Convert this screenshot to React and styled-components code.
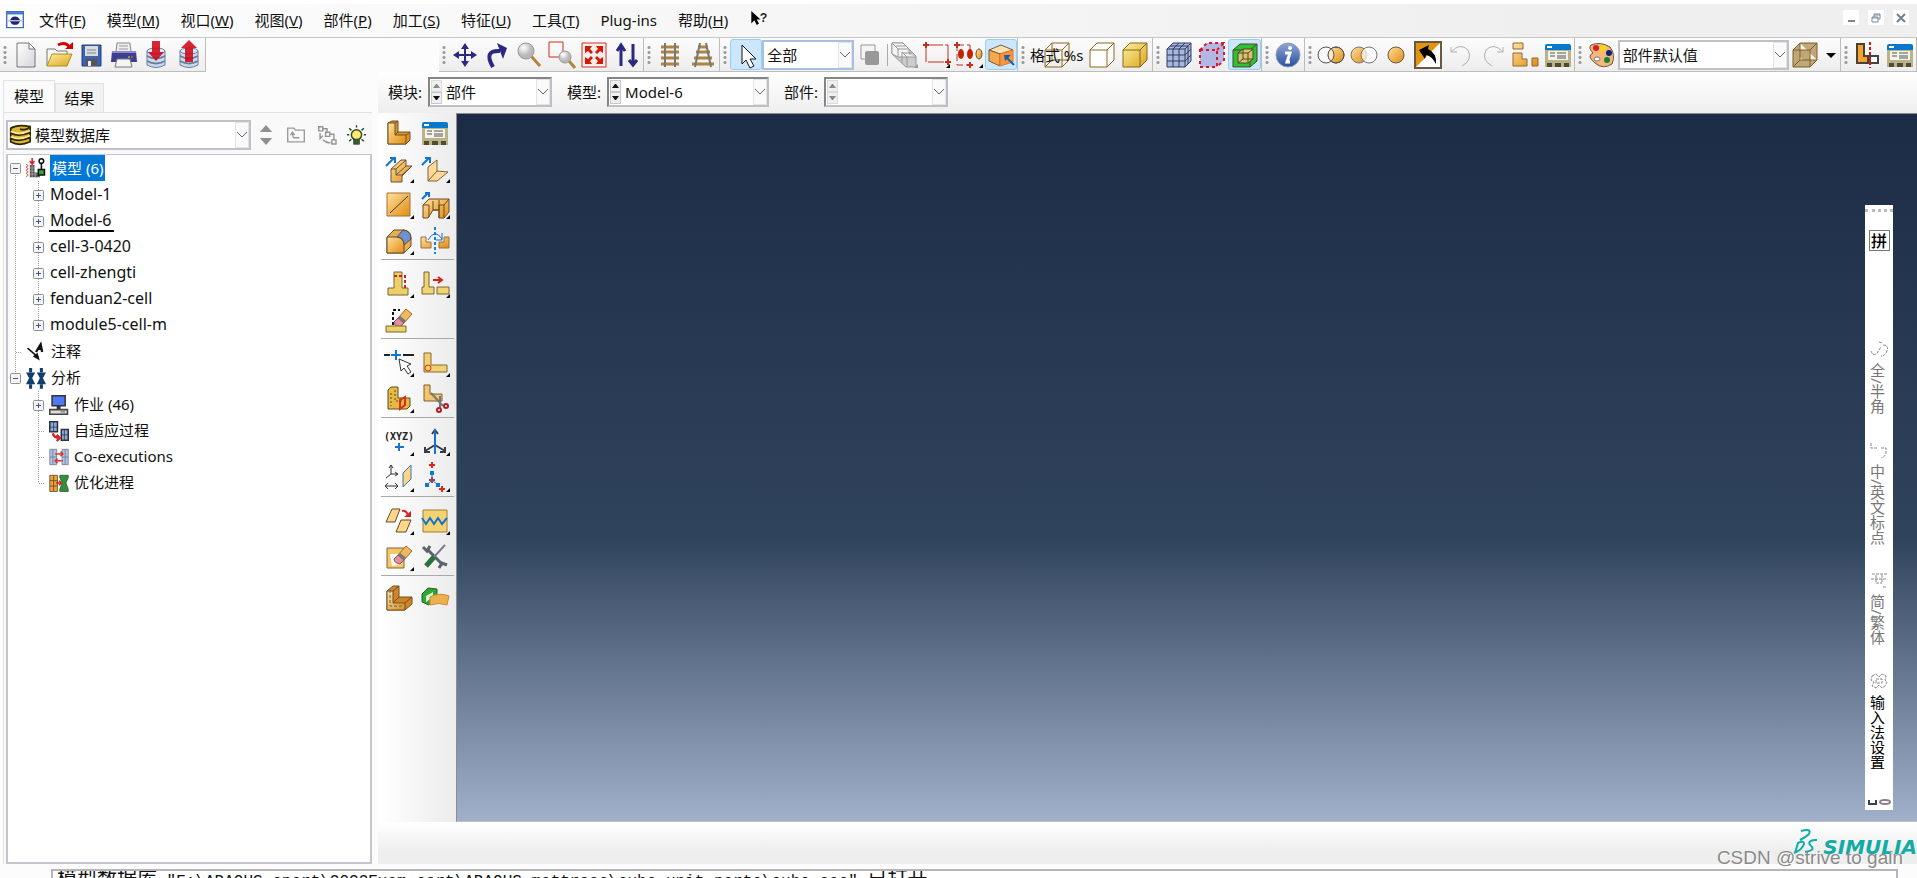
import React, {useState} from 'react';
import styled, {createGlobalStyle, css} from 'styled-components';

const GlobalStyle = createGlobalStyle`
    * {
        box-sizing: border-box;
    }

    body {
        margin: 0;
        overflow: hidden;
        background: #fcfcfc;
        color: #111;
        font-family: 'Noto Sans', 'Noto Sans CJK SC', sans-serif;
        font-size: 15px;
        line-height: 20px;
    }

    button, select, input {
        margin: 0;
        padding: 0;
        color: inherit;
        font: inherit;
    }
`;

const Page = styled.div`
    display: flex;
    flex-direction: column;
    height: 100vh;
    overflow: hidden;
`;

const MenuBar = styled.header`
    display: flex;
    align-items: center;
    justify-content: space-between;
    flex: 0 0 38px;
    padding: 0 8px 1px 6px;
    border-top: 4px solid #fff;
    border-bottom: 1px solid #c6c6c6;
    background: linear-gradient(90deg, #fdfdfd, #efefef 80%);
`;

const Menus = styled.nav`
    display: flex;
    align-items: center;
    gap: 21px;
`;

const MenuIcon = styled.span`
    display: flex;
    width: 18px;
    margin-right: -6px;
`;

const MenuButton = styled.button`
    border: none;
    background: none;
    white-space: nowrap;
`;

const WindowButtons = styled.div`
    display: flex;
    align-self: flex-start;
    gap: 9px;
    margin-top: 6px;
`;

const WindowButton = styled.button`
    display: flex;
    align-items: center;
    justify-content: center;
    width: 16px;
    height: 15px;
    border: none;
    background: #fff;
`;

const Toolbar = styled.div`
    display: flex;
    flex: 0 0 34px;
    overflow: hidden;
`;

const ToolbarSpace = styled.div`
    flex: 0 1 235px;
`;

const ToolGroup = styled.div`
    display: flex;
    align-items: center;
    flex: 0 0 ${({$width}) => $width}px;
    border-right: 1px solid #bdbdbd;
    border-bottom: 1px solid #bdbdbd;
    background: linear-gradient(#fcfcfc, #ededed);
`;

const Grip = styled.span`
    flex: 0 0 10px;
    height: 20px;
    background: radial-gradient(circle, #999 1px, transparent 2px) 3px 0 / 4px 5px repeat-y;
`;

const ToolButton = styled.button`
    position: relative;
    display: flex;
    align-items: center;
    justify-content: center;
    flex: 1 1 ${({$basis}) => $basis || 0}px;
    min-width: 0;
    height: 31px;
    border: 1px solid transparent;
    border-radius: 3px;
    background: none;

    ${({$active}) => $active && css`
        border-color: #98cdf5;
        background: #cce6fc;
    `}

    ${({$more}) => $more && css`
        &::after {
            content: '';
            position: absolute;
            right: 1px;
            bottom: 1px;
            border-bottom: 4px solid ${$more === 'off' ? '#999' : '#000'};
            border-left: 4px solid transparent;
        }
    `}

    svg {
        flex: none;
    }

    &:hover {
        background: #dceefb;
    }
`;

const ToolCaption = styled.span`
    position: absolute;
    white-space: nowrap;
`;

const Divider = styled.span`
    flex: 0 0 1px;
    height: 22px;
    background: #aaa;
`;

const SelectBox = styled.div`
    display: grid;
    flex: 0 0 ${({$width}) => $width}px;
    height: 30px;
    border: 2px solid ${({$focus}) => ($focus ? '#a9bfe2' : '#bfc0c8')};
    background: #fff;
`;

const Select = styled.select`
    grid-area: 1 / 1;
    min-width: 0;
    padding: 0 18px 0 ${({$indent}) => $indent || 3}px;
    border: none;
    outline: none;
    background: transparent;
    appearance: none;
`;

const Chevron = styled.span`
    display: flex;
    grid-area: 1 / 1;
    align-items: center;
    justify-content: center;
    justify-self: end;
    width: 14px;
    border: 1px solid #e4e4e4;
    background: #fafafa;
    pointer-events: none;
`;

const SelectIcon = styled.span`
    display: flex;
    grid-area: 1 / 1;
    align-items: center;
    padding-left: 1px;
    pointer-events: none;
`;

const Main = styled.main`
    display: flex;
    flex: 1;
    gap: 6px;
    min-height: 0;
    padding-bottom: 5px;
`;

const Sidebar = styled.aside`
    display: flex;
    flex: 0 0 372px;
    flex-direction: column;
    padding-left: 3px;
`;

const Tabs = styled.div`
    display: flex;
    align-items: flex-end;
    flex: 0 0 40px;
`;

const Tab = styled.button`
    width: ${({$active}) => ($active ? 52 : 49)}px;
    height: ${({$active}) => ($active ? 32 : 29)}px;
    padding-bottom: 1px;
    border: 1px solid #e2e2e2;
    border-bottom: none;
    background: ${({$active}) => ($active ? '#fbfbfb' : '#f2f2f2')};
`;

const Panel = styled.div`
    display: flex;
    flex: 1;
    flex-direction: column;
    gap: 4px;
    min-height: 0;
    padding: 7px 0 0 2px;
    border-top: 1px solid #e2e2e2;
    border-left: 1px solid #e2e2e2;
    background: #f9f9f9;
`;

const PanelTools = styled.div`
    display: flex;
    align-items: center;
`;

const PanelButton = styled.button`
    display: flex;
    align-items: center;
    justify-content: center;
    flex: 1;
    height: 28px;
    border: none;
    background: none;
`;

const Tree = styled.div`
    flex: 1;
    border: 2px solid #c5c6cd;
    border-top-width: 1px;
    background: #fff;
`;

const dots = '#a0a0a0 0 1px, transparent 1px 2px';

const RootList = styled.ul`
    margin: 0;
    padding: 0;
    list-style: none;
    background: repeating-linear-gradient(${dots}) 7px 20px / 1px 200px no-repeat;
`;

const SubList = styled.ul`
    margin: 0;
    padding: 1px 0 0;
    list-style: none;
    background: repeating-linear-gradient(${dots}) 30px 0 / 1px calc(100% - 13px) no-repeat;
`;

const ModelList = styled(SubList)`
    padding-bottom: 1px;
`;

const Row = styled.div`
    display: flex;
    align-items: center;
    height: 26px;
    padding-left: ${({$level}) => ($level ? 25 : 2)}px;
`;

const Expander = styled.button`
    display: flex;
    width: 11px;
    height: 11px;
    margin-right: 5px;
    border: none;
    background: none;
`;

const Stub = styled.span`
    width: 11px;
    height: 1px;
    margin-right: 5px;
    padding-left: 6px;
    background: repeating-linear-gradient(90deg, ${dots}) content-box;
`;

const RowIcon = styled.span`
    display: flex;
    width: 20px;
    margin-right: 4px;
`;

const Label = styled.span`
    padding: 0 2px 0 1px;
    border-bottom: 2px solid ${({$current}) => ($current ? '#000' : 'transparent')};
    font-size: ${({$large}) => ($large ? 16 : 15)}px;
    line-height: 20px;
    white-space: nowrap;

    ${({$selected}) => $selected && css`
        padding: 0 2px;
        border: none;
        background: #0078d7;
        color: #fff;
        line-height: 26px;
    `}
`;

const Workspace = styled.section`
    display: flex;
    flex: 1;
    flex-direction: column;
    min-width: 0;
`;

const ContextBar = styled.div`
    display: flex;
    align-items: center;
    flex: 0 0 41px;
    gap: 6px;
    padding: 0 0 1px 10px;
    background: linear-gradient(#fff, #eee);
`;

const ContextField = styled.div`
    display: flex;
    align-items: center;
    gap: 6px;
    margin-right: 9px;
`;

const SpinBox = styled.div`
    display: flex;
    width: ${({$width}) => $width}px;
    height: 30px;
    border: 2px solid #bdbec6;
    border-top-color: #858585;
    border-left-color: #858585;
    background: #fff;
`;

const SpinSelect = styled.div`
    display: grid;
    flex: 1;
    min-width: 0;
`;

const Spinner = styled.span`
    display: flex;
    flex-direction: column;
    flex: 0 0 13px;
    padding: 1px;
`;

const SpinButton = styled.button`
    display: flex;
    align-items: center;
    justify-content: center;
    flex: 1;
    border: 1px solid #c8c8c8;
    background: #f0f0f0;
    color: #111;

    &:disabled {
        border-color: #dcdcdc;
        color: #888;
    }
`;

const Stage = styled.div`
    display: flex;
    flex: 1;
    min-height: 0;
`;

const Toolbox = styled.div`
    flex: 0 0 78px;
    padding: 0 2px 0 3px;
    background: linear-gradient(90deg, #fff, #ececec);
`;

const ToolSection = styled.div`
    display: grid;
    grid-template-columns: 36px 36px;
    grid-auto-rows: 36px;
    padding: ${({$first}) => ($first ? 2 : 6)}px 0 0;
    border-bottom: 1px solid #a8a8a8;

    &:last-child {
        padding-top: 4px;
        border-bottom: none;
    }
`;

const ToolboxButton = styled(ToolButton)`
    height: 36px;

    &::after {
        right: 2px;
        bottom: 3px;
    }
`;

const Viewport = styled.div`
    position: relative;
    flex: 1;
    border: 1px solid #8d8d8d;
    border-right: none;
    border-bottom-color: #c0c0c0;
    background: linear-gradient(#1c2c46, #30435d 60%, #a1b0ca);
`;

/* floating input method strip, docked over the viewport */
const ImeBar = styled.div`
    position: absolute;
    top: 91px;
    right: 24px;
    display: flex;
    flex-direction: column;
    align-items: center;
    gap: 28px;
    width: 28px;
    padding: 4px 0;
    background: #fff;
    color: #666;
`;

const ImeHead = styled.div`
    display: flex;
    flex-direction: column;
    align-items: center;
    gap: 18px;
    width: 100%;
    margin-bottom: 62px;
`;

const ImeHandle = styled.span`
    width: 100%;
    border-top: 3px dotted #bbb;
`;

const ImeMode = styled.button`
    width: 21px;
    height: 21px;
    border: 1px solid #777;
    background: #fff;
    color: #000;
    font-size: 16px;
    font-weight: 500;
    line-height: 18px;
`;

const ImeItem = styled.button`
    display: flex;
    flex-direction: column;
    align-items: center;
    gap: 6px;
    border: none;
    background: none;
    color: ${({$strong}) => ($strong ? '#000' : '#777')};
`;

const ImeText = styled.span`
    margin-right: 4px;
    line-height: 16px;
    writing-mode: vertical-rl;
`;

const BrandBar = styled.footer`
    display: flex;
    position: relative;
    align-items: flex-start;
    justify-content: flex-end;
    flex: 0 0 42px;
    padding-top: 6px;
    background: linear-gradient(#fff, #eee 70%);
`;

const Brand = styled.span`
    padding: 9px 0 0 3px;
    color: #12aba5;
    font-family: 'DejaVu Sans', sans-serif;
    font-size: 20px;
    font-style: italic;
    font-weight: 700;
    line-height: 20px;
`;

const Watermark = styled.span`
    position: absolute;
    top: 24px;
    right: 14px;
    color: #8a8a8a;
    font-family: 'Liberation Sans', sans-serif;
    font-size: 19px;
    line-height: 24px;
    text-shadow: 1px 1px #fff;
    white-space: nowrap;
`;

const MessageArea = styled.div`
    flex: 0 0 9px;
    margin: 0 19px 0 51px;
    border: 2px solid #b5b5bb;
    border-bottom: none;
    background: #fff;
    overflow: hidden;
`;

const Message = styled.p`
    margin: 0;
    padding-left: 4px;
    font-family: 'Liberation Mono', 'Noto Sans CJK SC', monospace;
    font-size: 16px;
    line-height: 20px;
    white-space: pre;
`;

const MessageWord = styled.span`
    font-size: 20px;
`;

const SharedGradients = styled.svg`
    position: absolute;
    width: 0;
    height: 0;
`;

const Gradients = () => (
    <SharedGradients aria-hidden="true">
        <defs>
            <linearGradient id="gold" x1="0" y1="0" x2="1" y2="1">
                <stop offset="0" stopColor="#ffe0a0"/>
                <stop offset="1" stopColor="#e08c10"/>
            </linearGradient>
            <linearGradient id="yellow" x1="0" y1="0" x2="1" y2="1">
                <stop offset="0" stopColor="#fff0a0"/>
                <stop offset="1" stopColor="#d9a520"/>
            </linearGradient>
            <linearGradient id="blue" x1="0" y1="0" x2="0" y2="1">
                <stop offset="0" stopColor="#8fa6d8"/>
                <stop offset="1" stopColor="#27509c"/>
            </linearGradient>
            <linearGradient id="paper" x1="0" y1="0" x2="1" y2="1">
                <stop offset="0" stopColor="#fff"/>
                <stop offset="1" stopColor="#d5d5dc"/>
            </linearGradient>
            <radialGradient id="lens" cx=".35" cy=".3">
                <stop offset="0" stopColor="#fff"/>
                <stop offset="1" stopColor="#b8b8b8"/>
            </radialGradient>
        </defs>
    </SharedGradients>
);

const cubeEdges = 'M1 8H18V25H1ZM1 8L8 1H25V18L18 25M18 8L25 1';
const database = (
    <g stroke="#6d7f98" fill="#c9daf2">
        <path d="M4 9V23Q13 28 22 23V9Z"/>
        <ellipse cx="13" cy="9" rx="9" ry="3" fill="#dfe9f7"/>
        <path d="M4 14Q13 19 22 14M4 19Q13 24 22 19" fill="none" strokeWidth="2"/>
    </g>
);
const table = (
    <g>
        <path d="M0 4Q0 2 2 2H24Q26 2 26 4V25H0Z" fill="#0878cc"/>
        <path d="M2 5H7" stroke="#fff" strokeWidth="2"/>
        <path d="M0 8H26V25H0Z" fill="#b9b28a"/>
        <path d="M3 9H23V18H3Z" fill="#f4f4ea"/>
        <path d="M5 11H10M12 11H21M5 14H10M12 14H21M12 16H21" stroke="#555"/>
        <path d="M2 21H7V25H2ZM10 21H16V25H10ZM19 21H24V25H19Z" fill="#4f4c30"/>
    </g>
);
const eraser = (
    <g strokeWidth="1">
        <path d="M12 11L20 2L26 7L18 16Z" fill="#f2b860" stroke="#9a6a28"/>
        <path d="M12 11L18 16L14 20Q8 19 8 15Z" fill="#e88b9b" stroke="#87505a"/>
        <path d="M13 10L19 15" stroke="#777" strokeWidth="3"/>
    </g>
);

const ICONS = {
    newFile: <path d="M4 1H16L22 7V25H4ZM16 1V7H22" fill="url(#paper)" stroke="#777"/>,
    open: (
        <g>
            <path d="M1 24V7H9L11 9H21V13" fill="#f7f7f7" stroke="#777"/>
            <path d="M1 24L6 12H26L21 24Z" fill="url(#yellow)" stroke="#b58a20"/>
            <path d="M12 3Q20 -1 24 6" fill="none" stroke="#d40000" strokeWidth="3"/>
            <path d="M19 7H27V0Z" fill="#d40000"/>
        </g>
    ),
    save: (
        <g>
            <path d="M4 3H23V24H4Z" fill="#3e62ae" stroke="#24407d"/>
            <path d="M7 4H20V14H7Z" fill="#d9dbe0"/>
            <path d="M9 8H18M9 11H18" stroke="#888"/>
            <path d="M8 17H19V24H8Z" fill="#555"/>
            <path d="M10 19H13V24H10Z" fill="#eee"/>
        </g>
    ),
    print: (
        <g>
            <path d="M6 1H19L20 10H5Z" fill="#eee" stroke="#888"/>
            <path d="M8 4H17M8 7H17" stroke="#999"/>
            <path d="M1 9H25L26 20H0Z" fill="#3e3e91"/>
            <path d="M1 10H25" stroke="#8b8bc7" strokeWidth="2"/>
            <circle cx="18" cy="15" r="1" fill="#5d5"/>
            <circle cx="21" cy="15" r="1" fill="#f44"/>
            <path d="M6 17H19L21 25H4Z" fill="#f5f5f5" stroke="#777"/>
        </g>
    ),
    importDb: <g>{database}<path d="M9 -1H17V10H21L13 19L5 10H9Z" fill="#d10010" fillOpacity=".85"/></g>,
    exportDb: <g>{database}<path d="M13 -2L21 6H17V20H9V6H5Z" fill="#d10010" fillOpacity=".85"/></g>,
    pan: (
        <g fill="#29297f">
            <path d="M12 5H14V21H12ZM5 12H21V14H5Z"/>
            <path d="M13 1L17 7H9ZM13 25L17 19H9ZM1 13L7 9V17ZM25 13L19 9V17Z"/>
        </g>
    ),
    rotate: (
        <g>
            <path d="M9 25Q-1 8 16 9" fill="none" stroke="#29297f" strokeWidth="4"/>
            <path d="M13 1L23 6L19 17Z" fill="#29297f"/>
        </g>
    ),
    magnify: (
        <g>
            <path d="M14 14L23 24" stroke="#b1863c" strokeWidth="3"/>
            <circle cx="9" cy="9" r="8" fill="url(#lens)" stroke="#999"/>
        </g>
    ),
    zoomBox: (
        <g>
            <path d="M0 0H14V15H0Z" fill="none" stroke="#d32a1a"/>
            <path d="M20 19L26 26" stroke="#b1863c" strokeWidth="3"/>
            <circle cx="16" cy="15" r="6" fill="url(#lens)" stroke="#999"/>
        </g>
    ),
    fit: (
        <g fill="#cf1d05">
            <path d="M1 1H25V25H1Z" fill="#ffecec" stroke="#cf3020" strokeWidth="1"/>
            <path d="M4 4H11L9 7L12 10L10 12L7 9L4 11ZM22 4V11L19 9L16 12L14 10L17 7L15 4ZM4 22V15L7 17L10 14L12 16L9 19L11 22ZM22 22H15L17 19L14 16L16 14L19 17L22 15Z"/>
        </g>
    ),
    upDown: (
        <path d="M7 24V5M19 2V21M3 9L7 3L11 9M15 18L19 23L23 18" fill="none" stroke="#29297f" strokeWidth="3"/>
    ),
    ladder: (
        <g>
            <path d="M4 5H22M4 10H22M4 16H22M4 22H22" stroke="#ad8441" strokeWidth="3"/>
            <path d="M8 1V25M18 1V25" stroke="#777" strokeWidth="2"/>
        </g>
    ),
    perspective: (
        <g>
            <path d="M8 5H18M6 10H20M4 16H22M2 22H24" stroke="#ad8441" strokeWidth="3"/>
            <path d="M10 1L5 25M16 1L21 25" stroke="#777" strokeWidth="2"/>
        </g>
    ),
    pointer: <path d="M9 3V22L13 18L17 26L21 24L17 17H23Z" fill="#fff" stroke="#111" strokeWidth="1"/>,
    layers: (
        <g>
            <path d="M4 3H18V17H4Z" fill="#f4f4f4" stroke="#999"/>
            <rect x="8" y="9" width="14" height="14" rx="2" fill="#999"/>
        </g>
    ),
    cubes: (
        <g fill="#f3f3f3" stroke="#999">
            <path d="M1 1H12L25 14V25H15L1 12Z" fill="#ccc"/>
            <path d="M1 1H12L18 7V15H7L1 12Z"/>
            <path d="M1 1L7 7H18M7 7V15M5 4H15M11 10L16 15H25M16 15V25M12 11H21M11 10V21"/>
        </g>
    ),
    redBox: (
        <g stroke="#c4301c" fill="none">
            <path d="M3 3H25V19M3 3V20H21" strokeDasharray="17 2"/>
            <path d="M0 3H6M3 0V6M22 20H28M25 17V23" strokeWidth="2"/>
        </g>
    ),
    redNodes: (
        <g>
            <path d="M2 3H15V23H2Z" fill="none" stroke="#c4301c" strokeDasharray="7 3"/>
            <path d="M-1 3H5M2 0V6M12 23H18M15 20V26" stroke="#c4301c" strokeWidth="2"/>
            <ellipse cx="6" cy="12" rx="3" ry="5" fill="#c32205"/>
            <ellipse cx="15" cy="12" rx="3" ry="5" fill="#c32205"/>
            <ellipse cx="24" cy="12" rx="3" ry="5" fill="url(#gold)" stroke="#665030"/>
        </g>
    ),
    orangeBox: (
        <g stroke="#6f5d43">
            <path d="M1 8L13 3L25 8L12 12Z" fill="#ffe0b0"/>
            <path d="M1 8L12 12V24L1 19Z" fill="#f4a94c"/>
            <path d="M12 12L25 8V20L12 24Z" fill="#f99542" stroke="#e07920"/>
            <path d="M26 23L18 15" stroke="#145fac" strokeWidth="2"/>
            <path d="M16 13H23L17 19Z" fill="#145fac" stroke="none"/>
        </g>
    ),
    wireCube: <path d={`${cubeEdges}M8 1V18H25M8 18L1 25`} fill="none" stroke="#8b681a"/>,
    hiddenCube: <path d={cubeEdges} fill="#fff" stroke="#8b681a"/>,
    solidCube: <path d={cubeEdges} fill="url(#yellow)" stroke="#86671c"/>,
    meshCube: (
        <g>
            <path d="M1 7H19V25H1ZM1 7L7 1H25V19L19 25" fill="#a9b6dd"/>
            <path d="M1 7H19V25H1ZM1 7L7 1H25V19L19 25M19 7L25 1M7 7V25M13 7V25M1 13H19L25 7M1 19H19L25 13M7 7L13 1M13 7L19 1M4 4H22V22" fill="none" stroke="#2e3c60"/>
        </g>
    ),
    seedCube: (
        <g>
            <path d={cubeEdges} fill="#b0b8e3"/>
            <path d={cubeEdges} fill="none" stroke="#e01428" strokeWidth="2" strokeDasharray="3 3"/>
        </g>
    ),
    greenCube: (
        <g stroke="#4d4624">
            <path d="M1 8L8 2H25V19L18 25H1Z" fill="#2bc336"/>
            <path d="M1 8H18V25M18 8L25 2" fill="none"/>
            <path d="M6 11L11 7H21V17L16 21H6Z" fill="#dac36e"/>
            <path d="M6 11H16V21M16 11L21 7M11 7V17H21M11 17L6 21" fill="none"/>
        </g>
    ),
    info: (
        <g>
            <circle cx="13" cy="13" r="12" fill="url(#blue)" stroke="#8f9cb5"/>
            <ellipse cx="15" cy="6" rx="2" ry="2" fill="#fff"/>
            <path d="M10 11H15L12 20H15" fill="none" stroke="#fff" strokeWidth="3"/>
        </g>
    ),
    circlesRight: (
        <g stroke="#555">
            <circle cx="18" cy="13" r="8" fill="url(#gold)"/>
            <circle cx="8" cy="13" r="8" fill="#fff" fillOpacity=".6"/>
            <circle cx="18" cy="13" r="8" fill="none"/>
        </g>
    ),
    circlesLeft: (
        <g stroke="#777">
            <circle cx="8" cy="13" r="8" fill="url(#gold)"/>
            <circle cx="18" cy="13" r="8" fill="#fff" fillOpacity=".7"/>
        </g>
    ),
    circle: <circle cx="13" cy="13" r="8" fill="url(#gold)" stroke="#6b5840"/>,
    swap: (
        <g>
            <path d="M0 0H26V26H0Z" fill="#fff"/>
            <path d="M0 0H26L0 26Z" fill="#e3940e"/>
            <path d="M0 0H26V26H0Z" fill="none" stroke="#665a47" strokeWidth="2"/>
            <path d="M4 8L14 3L13 7Q22 11 21 22Q17 14 11 13L10 17Z" fill="#000"/>
        </g>
    ),
    undo: <path d="M3 5V10H9M3 10Q12 0 20 8Q25 18 14 24" fill="none" stroke="#b0b0b0"/>,
    redo: <path d="M23 5V10H17M23 10Q14 0 6 8Q1 18 12 24" fill="none" stroke="#b0b0b0"/>,
    parts: (
        <g fill="url(#gold)" stroke="#8e6934">
            <path d="M1 1H11V7H1ZM1 11H10V17H15V24H1ZM20 16H26V24H20Z"/>
        </g>
    ),
    table,
    palette: (
        <g>
            <path d="M3 3Q12 -1 22 5Q28 13 24 22Q15 28 7 21Q-2 14 5 11Q0 6 3 3Z" fill="#f4b67a" stroke="#6b5945"/>
            <circle cx="8" cy="6" r="3" fill="#d91c26"/>
            <circle cx="15" cy="6" r="3" fill="#f1dc00"/>
            <circle cx="21" cy="11" r="3" fill="#0a247d"/>
            <circle cx="19" cy="18" r="3" fill="#178332"/>
            <ellipse cx="9" cy="17" rx="3" ry="2" fill="#fff" stroke="#777"/>
        </g>
    ),
    tanCube: <path d={`${cubeEdges}M8 1V18H25M8 18L1 25`} fill="#c1a777" stroke="#7f6029"/>,
    caret: <path d="M8 11H18L13 16Z" fill="#000"/>,
    splitPart: (
        <g>
            <path d="M3 2H10V14H14V21H3Z" fill="#f3a32f" stroke="#4b4032" strokeWidth="2"/>
            <path d="M16 14H24V21H16Z" fill="#fff" stroke="#444" strokeWidth="2"/>
            <path d="M16 0V26" stroke="#e01010" strokeWidth="2" strokeDasharray="3 2"/>
        </g>
    ),
    createPart: (
        <g stroke="#725126">
            <path d="M2 3L6 1H12V12H24V20L20 24H2Z" fill="#dc922a"/>
            <path d="M2 3H9V15H20V24H2Z" fill="url(#gold)"/>
            <path d="M9 3L12 1M9 15L12 12M20 15L24 12" fill="none"/>
        </g>
    ),
    extrudeSolid: (
        <g>
            <path d="M5 13L15 4H20V10H26L16 20V26H5Z" fill="url(#gold)" stroke="#64563c"/>
            <path d="M5 13H10V19H16L26 10M10 13L20 4M10 19L20 10" fill="none" stroke="#64563c"/>
            <path d="M0 10L8 2M4 2H9V7" fill="none" stroke="#1473ce" strokeWidth="2"/>
        </g>
    ),
    extrudeShell: (
        <g>
            <path d="M6 11L15 4V15L26 16L15 25H6Z" fill="#ffd89a" stroke="#7e6138"/>
            <path d="M6 25L15 15" stroke="#7e6138"/>
            <path d="M0 9L7 2M3 2H8V7" fill="none" stroke="#1473ce" strokeWidth="2"/>
        </g>
    ),
    wire: (
        <g>
            <path d="M1 1H24V24H1Z" fill="url(#gold)" stroke="#a37331"/>
            <path d="M4 21L22 4" stroke="#4b371e"/>
        </g>
    ),
    cutPart: (
        <g>
            <path d="M1 13L7 7H27V20L22 26H17V18H11L6 26H1Z" fill="url(#gold)" stroke="#6b4a21"/>
            <path d="M1 13H7V25M17 26V13H22V26M22 13L27 7M11 9V18H17V8" fill="none" stroke="#6b4a21"/>
            <path d="M0 7L6 1M3 1H7V5" fill="none" stroke="#1473ce" strokeWidth="2"/>
        </g>
    ),
    round: (
        <g stroke="#654c2a">
            <path d="M1 9L8 2H18Q25 3 25 10V18L18 25H1Z" fill="#eaad54"/>
            <path d="M1 9H11Q18 10 18 17V25H1Z" fill="url(#gold)"/>
            <path d="M11 9L17 2Q25 3 25 11L18 17Q18 9 11 9Z" fill="#6c91d5"/>
        </g>
    ),
    mirror: (
        <g>
            <path d="M-1 9H4V14H9V20H-1ZM27 9H22V14H17V20H27Z" fill="url(#gold)" stroke="#967044"/>
            <path d="M13 -1V26" stroke="#1882d5" strokeWidth="2" strokeDasharray="3 2"/>
            <path d="M6 12Q13 0 20 11M20 5V12H14" fill="none" stroke="#1473ce"/>
        </g>
    ),
    partition: (
        <g>
            <path d="M8 1H16V17H22V24H2V17H8Z" fill="#ecd16a" stroke="#7b662c"/>
            <path d="M8 5H19V17" fill="none" stroke="#d81f15" strokeWidth="2" strokeDasharray="3 2"/>
        </g>
    ),
    moveFeature: (
        <g>
            <path d="M2 1H7V16H12V23H0V16H2ZM15 16H27V23H15Z" fill="#efd573" stroke="#7b662c"/>
            <path d="M11 9H19M16 6L20 9L16 12" fill="none" stroke="#cd2516" strokeWidth="2"/>
        </g>
    ),
    deleteFeature: (
        <g>
            <path d="M7 18V3H14" fill="none" stroke="#111" strokeWidth="2" strokeDasharray="3 2"/>
            {eraser}
            <path d="M0 19H20V25H0Z" fill="#ecd16a" stroke="#7b662c"/>
        </g>
    ),
    pickPoint: (
        <g>
            <path d="M-2 5H4M17 5H28" stroke="#222" strokeWidth="2"/>
            <path d="M5 5H15M10 0V10" stroke="#1473ce" strokeWidth="2"/>
            <path d="M13 9L15 21L18 18L22 24L25 22L21 16L25 14Z" fill="#fff" stroke="#333"/>
        </g>
    ),
    datum: (
        <g>
            <path d="M2 3H9V15H25V22H2Z" fill="#f0d172" stroke="#876a30"/>
            <circle cx="6" cy="18" r="3" fill="none" stroke="#df2b16"/>
        </g>
    ),
    cells: (
        <g>
            <path d="M2 4L5 1H12V12H24V20L21 23H2Z" fill="#e5b944" stroke="#5e4d20"/>
            <path d="M9 4V15H21M5 7V20" fill="none" stroke="#5e4d20" strokeDasharray="2 2"/>
            <path d="M14 14L19 11V19L14 23Z" fill="none" stroke="#d6301c" strokeWidth="2"/>
        </g>
    ),
    trim: (
        <g>
            <path d="M2 -1H8V8H20V15H2Z" fill="#f2c66c" stroke="#7b5e32"/>
            <path d="M9 7L21 20M18 10V22" stroke="#777" strokeWidth="2"/>
            <circle cx="17" cy="24" r="2" fill="none" stroke="#ad1c29" strokeWidth="2"/>
            <circle cx="24" cy="20" r="2" fill="none" stroke="#ad1c29" strokeWidth="2"/>
        </g>
    ),
    xyz: (
        <g>
            <text x="13" y="11" fontFamily="DejaVu Sans Mono" fontSize="10" fontWeight="700" textAnchor="middle" fill="#222">(XYZ)</text>
            <path d="M9 18H18M13 14V22" stroke="#1676d0" strokeWidth="2"/>
        </g>
    ),
    axes: (
        <g fill="none" stroke="#343c45" strokeWidth="2">
            <path d="M13 16L3 22M13 16L23 22M3 18V23H8M23 18V23H18M10 5L13 1L16 5"/>
            <path d="M13 0V25" stroke="#1473ce"/>
        </g>
    ),
    plane: (
        <g>
            <path d="M5 1V9L0 13M5 9H12M3 3L5 0L7 3M9 7L12 9L9 11M-1 21H12M2 18L-1 21L2 24M9 18L12 21L9 24" fill="none" stroke="#333"/>
            <path d="M17 8L25 0V14L17 22Z" fill="#ffd489" stroke="#2f78b7"/>
        </g>
    ),
    points: (
        <g>
            <path d="M7 0H13M10 -3V3M7 15H13M10 12V18M17 24H23M20 21V27" stroke="#d92a22" strokeWidth="2"/>
            <path d="M8 6H12V10H8ZM3 18H7V22H3ZM14 18H18V22H14Z" fill="#1477d0"/>
            <path d="M10 10V15L5 20M10 15L16 20" fill="none" stroke="#1477d0"/>
        </g>
    ),
    planes: (
        <g>
            <path d="M6 1H14L9 14H0ZM15 12H25L20 24H10Z" fill="#ffd78b" stroke="#5e4d29"/>
            <path d="M16 3Q20 2 22 7" fill="none" stroke="#d22" strokeWidth="2"/>
            <path d="M18 9H25V3Z" fill="#d22"/>
        </g>
    ),
    fold: (
        <g>
            <path d="M1 2H25V24H1Z" fill="#f4d373" stroke="#a47d31"/>
            <path d="M0 10L4 16L8 10L12 16L16 10L20 16L25 10" fill="none" stroke="#1473ce" strokeWidth="2"/>
        </g>
    ),
    erase: <g><path d="M1 4H18V24H1Z" fill="#f5c765" stroke="#80683c"/><path d="M4 10H12L16 20L6 22Z" fill="#fff"/>{eraser}</g>,
    tools: (
        <g>
            <path d="M6 6L21 21" stroke="#59636c" strokeWidth="3"/>
            <path d="M1 3L5 7L8 2M17 24L20 19L25 21" fill="none" stroke="#59636c" strokeWidth="3"/>
            <path d="M23 1L12 13" stroke="#75808a" strokeWidth="2"/>
            <path d="M12 13L4 22" stroke="#267442" strokeWidth="5"/>
        </g>
    ),
    assembly: (
        <g stroke="#725126">
            <path d="M1 6L7 1H13V12H26V19L19 25H1Z" fill="#d08423"/>
            <path d="M1 6H7V18H19V25H1Z" fill="url(#gold)"/>
            <path d="M7 6L13 1M7 18L13 12M19 18L26 12" fill="none"/>
            <path d="M4 5V21H16" fill="none" stroke="#2d6caf" strokeDasharray="3 2"/>
        </g>
    ),
    greenPart: (
        <g>
            <path d="M0 9L6 3L15 4V13L7 20L0 17Z" fill="#31a535" stroke="#235e29"/>
            <path d="M4 11L11 7V12L4 17Z" fill="#d9f5d9"/>
            <path d="M8 12Q17 7 27 11L25 20Q17 17 8 20Z" fill="#edb04c" stroke="#c98a30"/>
        </g>
    ),
    helpPointer: (
        <g>
            <path d="M3 4V20L7 16L10 22L13 20L10 15H15Z" fill="#000"/>
            <text x="14" y="18" fontFamily="Liberation Sans" fontSize="16" fontWeight="700" fill="#222">?</text>
        </g>
    ),
    app: (
        <g>
            <path d="M1 1H25V24H1Z" fill="#fff" stroke="#416fc0" strokeWidth="2"/>
            <path d="M1 1H25V5H1Z" fill="#477bcd"/>
            <ellipse cx="13" cy="14" rx="7" ry="6" fill="#25256e"/>
            <path d="M3 14H23" stroke="#b5b5ed" strokeWidth="2"/>
        </g>
    ),
    stack: (
        <g fill="#ddb735" stroke="#2d250b" strokeWidth="2">
            <path d="M2 5Q10 0 25 3V21Q12 27 2 21Z"/>
            <path d="M2 9Q12 14 25 8M2 15Q12 20 25 14" fill="none" stroke="#fff09a"/>
            <path d="M2 11Q12 16 25 10M2 17Q12 22 25 16M13 6Q20 8 24 4" fill="none"/>
        </g>
    ),
    sort: <path d="M13 0L21 9H5ZM13 26L21 17H5Z" fill="#909090"/>,
    folderUp: (
        <path d="M1 23V3H10L12 6H25V23ZM18 17H11Q8 17 8 10M5 13L8 9L11 13" fill="none" stroke="#9b9b9b" strokeWidth="2"/>
    ),
    branch: (
        <path d="M1 1H7V7H1ZM11 9H17V15H11ZM20 20H26V26H20ZM7 4H13V9M17 12H23V20M3 10V18L7 14M7 20Q12 25 18 24" fill="none" stroke="#929292" strokeWidth="2"/>
    ),
    bulb: (
        <g stroke="#304c23">
            <circle cx="13" cy="12" r="7" fill="#ffeb70" strokeWidth="2"/>
            <path d="M9 18H17V25H9Z" fill="#3d5836"/>
            <path d="M13 -1V2M3 3L6 6M23 3L20 6M0 12H3M23 12H26M3 21L6 18M23 21L20 18" strokeWidth="2"/>
        </g>
    ),
    treeModel: (
        <g>
            <path d="M5 9H11V19H18V25H5Z" fill="#555"/>
            <path d="M5 13H11M5 17H11M8 9V25M5 21H18M12 19V25" stroke="#aaa"/>
            <path d="M0 8L3 10L0 12L3 14L0 16L3 18L0 20L3 22L0 25" fill="none" stroke="#d22"/>
            <path d="M8 0V7M5 4L8 8L11 4" fill="none" stroke="#d22" strokeWidth="2"/>
            <path d="M20 7V17" stroke="#111" strokeWidth="2"/>
            <circle cx="20" cy="4" r="3" fill="#fff" stroke="#111" strokeWidth="2"/>
            <path d="M16 15H24V22H16Z" fill="#30a930" stroke="#111" strokeWidth="2"/>
        </g>
    ),
    note: (
        <g>
            <path d="M2 8L16 20" stroke="#111" strokeWidth="2"/>
            <path d="M18 24L9 19L15 14Z" fill="#111"/>
            <path d="M13 13L19 3L21 13M15 9H21" fill="none" stroke="#111" strokeWidth="3"/>
        </g>
    ),
    analysis: (
        <g fill="#123f6d">
            <path d="M0 6H12L8 13L12 21H0L4 13ZM14 6H26L22 13L26 21H14L18 13Z"/>
            <path d="M4 0H8V6H4ZM4 21H8V27H4ZM18 0H22V6H18ZM18 21H22V27H18Z"/>
            <path d="M3 10H9M17 10H23M3 17H9M17 17H23" stroke="#123f6d" strokeWidth="3"/>
        </g>
    ),
    job: (
        <g>
            <path d="M4 1H21V14H4Z" fill="#4d79f6" stroke="#333" strokeWidth="2"/>
            <path d="M10 14H15V19H10Z" fill="#333"/>
            <path d="M1 19H24V25H1Z" fill="#ddd" stroke="#444" strokeWidth="2"/>
            <path d="M15 22H21" stroke="#444"/>
        </g>
    ),
    adaptive: (
        <g>
            <path d="M1 1H11V14H1ZM16 11H25V25H16Z" fill="#86abe7" stroke="#333" strokeWidth="2"/>
            <path d="M6 1V14M1 8H11M20 11V25M16 18H25" stroke="#333"/>
            <path d="M5 16Q6 22 14 22M10 18L14 22L10 26" fill="none" stroke="#d22222" strokeWidth="3"/>
        </g>
    ),
    coexec: (
        <g>
            <path d="M1 3H10V23H1ZM17 3H25V23H17Z" fill="#a8c4f1" stroke="#777"/>
            <path d="M5 3V23M1 13H10M21 3V23M17 13H25" stroke="#777"/>
            <path d="M8 9H18M15 6L18 9L15 12M18 18H8M11 15L8 18L11 21" fill="none" stroke="#d33" strokeWidth="2"/>
        </g>
    ),
    optimize: (
        <g>
            <path d="M1 3H11V24H1Z" fill="#f1a336" stroke="#5b421d"/>
            <path d="M6 3V24M1 10H11M1 17H11" stroke="#5b421d"/>
            <path d="M14 3H25V6L22 13L25 21V24H14V21L17 13L14 6Z" fill="#348e3d" stroke="#24582b"/>
            <path d="M9 13H16M13 10L16 13L13 16" fill="none" stroke="#d22" strokeWidth="2"/>
        </g>
    ),
};

const Icon = ({name, size = 26}) => (
    <svg width={size} height={size} viewBox="0 0 26 26" overflow="visible" aria-hidden="true">{ICONS[name]}</svg>
);

const Tool = ({name, children, as: Button = ToolButton, ...props}) => (
    <Button type="button" aria-label={name} {...props}>
        <Icon name={name}/>
        {children}
    </Button>
);

const Arrow = () => (
    <Chevron>
        <svg width="12" height="8" viewBox="0 0 12 8" aria-hidden="true">
            <path d="M1 1L6 6L11 1" fill="none" stroke="#666"/>
        </svg>
    </Chevron>
);

const ToolSelect = ({label, options, ...props}) => (
    <SelectBox {...props}>
        <Select aria-label={label}>
            {options.map((option) => <option key={option}>{option}</option>)}
        </Select>
        <Arrow/>
    </SelectBox>
);

const MENUS = [
    ['文件', 'F'], ['模型', 'M'], ['视口', 'W'], ['视图', 'V'], ['部件', 'P'],
    ['加工', 'S'], ['特征', 'U'], ['工具', 'T'], ['Plug-ins'], ['帮助', 'H'],
];

const FILE_TOOLS = ['newFile', 'open', 'save', 'print', 'importDb', 'exportDb'];
const VIEW_TOOLS = ['pan', 'rotate', 'magnify', 'zoomBox', 'fit', 'upDown'];
const DISPLAY_TOOLS = ['circlesRight', 'circlesLeft', 'circle', 'swap', 'undo', 'redo', 'parts', 'table'];

const TOOLBOX = [
    ['createPart', 'table', 'extrudeSolid+', 'extrudeShell+', 'wire+', 'cutPart+', 'round+', 'mirror'],
    ['partition+', 'moveFeature+', 'deleteFeature'],
    ['pickPoint+', 'datum+', 'cells+', 'trim'],
    ['xyz+', 'axes+', 'plane+', 'points+'],
    ['planes+', 'fold+', 'erase+', 'tools'],
    ['assembly', 'greenPart'],
];

const MODELS = ['Model-1', 'Model-6', 'cell-3-0420', 'cell-zhengti', 'fenduan2-cell', 'module5-cell-m'];

const MainToolbar = () => (
    <Toolbar>
        <ToolGroup $width={206}>
            <Grip/>
            {FILE_TOOLS.map((name) => <Tool key={name} name={name}/>)}
        </ToolGroup>
        <ToolbarSpace/>
        <ToolGroup $width={205}>
            <Grip/>
            {VIEW_TOOLS.map((name) => <Tool key={name} name={name}/>)}
        </ToolGroup>
        <ToolGroup $width={76}>
            <Grip/>
            <Tool name="ladder"/>
            <Tool name="perspective"/>
        </ToolGroup>
        <ToolGroup $width={298}>
            <Grip/>
            <Tool name="pointer" $active/>
            <ToolSelect label="选择" options={['全部']} $width={92} $focus/>
            <Tool name="layers"/>
            <Divider/>
            <Tool name="cubes" $more="off"/>
            <Tool name="redBox" $more="on"/>
            <Tool name="redNodes" $more="on"/>
            <Tool name="orangeBox" $active/>
        </ToolGroup>
        <ToolGroup $width={135}>
            <Grip/>
            <Tool name="wireCube" $basis={26}><ToolCaption>格式 %s</ToolCaption></Tool>
            <Tool name="hiddenCube"/>
            <Tool name="solidCube"/>
        </ToolGroup>
        <ToolGroup $width={109}>
            <Grip/>
            <Tool name="meshCube"/>
            <Tool name="seedCube"/>
            <Tool name="greenCube" $active/>
        </ToolGroup>
        <ToolGroup $width={43}>
            <Grip/>
            <Tool name="info"/>
        </ToolGroup>
        <ToolGroup $width={270}>
            <Grip/>
            {DISPLAY_TOOLS.map((name) => <Tool key={name} name={name}/>)}
        </ToolGroup>
        <ToolGroup $width={263}>
            <Grip/>
            <Tool name="palette" $basis={16}/>
            <ToolSelect label="颜色" options={['部件默认值']} $width={171}/>
            <Tool name="tanCube" $basis={16}/>
            <Tool name="caret"/>
        </ToolGroup>
        <ToolGroup $width={76}>
            <Grip/>
            <Tool name="splitPart"/>
            <Tool name="table"/>
        </ToolGroup>
    </Toolbar>
);

const Toggle = ({open, label, onClick}) => (
    <Expander type="button" aria-label={label} aria-expanded={open} onClick={onClick}>
        <svg width="11" height="11" viewBox="0 0 11 11" aria-hidden="true">
            <rect x=".5" y=".5" width="10" height="10" rx="1" fill="#f4f4f4" stroke="#8f8f8f"/>
            <path d={open ? 'M3 5.5H8' : 'M3 5.5H8M5.5 3V8'} stroke="#3a55a5"/>
        </svg>
    </Expander>
);

const ModelTree = () => {
    const [modelsOpen, setModelsOpen] = useState(true);
    const [analysisOpen, setAnalysisOpen] = useState(true);

    return (
        <Tree>
            <RootList>
                <li>
                    <Row>
                        <Toggle open={modelsOpen} label="模型" onClick={() => setModelsOpen(!modelsOpen)}/>
                        <RowIcon><Icon name="treeModel" size={20}/></RowIcon>
                        <Label $selected>模型 (6)</Label>
                    </Row>
                    {modelsOpen && (
                        <ModelList>
                            {MODELS.map((model) => (
                                <li key={model}>
                                    <Row $level={1}>
                                        <Toggle label={model}/>
                                        <Label $large $current={model === 'Model-6'}>{model}</Label>
                                    </Row>
                                </li>
                            ))}
                        </ModelList>
                    )}
                </li>
                <li>
                    <Row>
                        <Stub/>
                        <RowIcon><Icon name="note" size={20}/></RowIcon>
                        <Label>注释</Label>
                    </Row>
                </li>
                <li>
                    <Row>
                        <Toggle open={analysisOpen} label="分析" onClick={() => setAnalysisOpen(!analysisOpen)}/>
                        <RowIcon><Icon name="analysis" size={20}/></RowIcon>
                        <Label>分析</Label>
                    </Row>
                    {analysisOpen && (
                        <SubList>
                            <li><Row $level={1}><Toggle label="作业"/><RowIcon><Icon name="job" size={20}/></RowIcon><Label>作业 (46)</Label></Row></li>
                            <li><Row $level={1}><Stub/><RowIcon><Icon name="adaptive" size={20}/></RowIcon><Label>自适应过程</Label></Row></li>
                            <li><Row $level={1}><Stub/><RowIcon><Icon name="coexec" size={20}/></RowIcon><Label>Co-executions</Label></Row></li>
                            <li><Row $level={1}><Stub/><RowIcon><Icon name="optimize" size={20}/></RowIcon><Label>优化进程</Label></Row></li>
                        </SubList>
                    )}
                </li>
            </RootList>
        </Tree>
    );
};

const SpinField = ({id, label, value, width, up, down}) => (
    <ContextField>
        <label htmlFor={id}>{label}:</label>
        <SpinBox $width={width}>
            <Spinner>
                <SpinButton type="button" aria-label="上一个" disabled={!up}>
                    <svg width="7" height="4" viewBox="0 0 7 4"><path d="M0 4H7L4 0H3Z" fill="currentColor"/></svg>
                </SpinButton>
                <SpinButton type="button" aria-label="下一个" disabled={!down}>
                    <svg width="7" height="4" viewBox="0 0 7 4"><path d="M0 0H7L4 4H3Z" fill="currentColor"/></svg>
                </SpinButton>
            </Spinner>
            <SpinSelect>
                <Select id={id}><option>{value}</option></Select>
                <Arrow/>
            </SpinSelect>
        </SpinBox>
    </ContextField>
);

const ImeGlyph = ({d}) => (
    <svg width="18" height="16" viewBox="0 0 18 16" aria-hidden="true">
        <path d={d} fill="none" stroke="#888" strokeDasharray="3 1"/>
    </svg>
);

const InputMethodBar = () => (
    <ImeBar>
        <ImeHead>
            <ImeHandle/>
            <ImeMode type="button">拼</ImeMode>
        </ImeHead>
        <ImeItem type="button">
            <ImeGlyph d="M9 1L13 2M1 10Q3 16 7 12L11 6M13 4Q19 4 17 10Q15 15 11 15"/>
            <ImeText>全/半角</ImeText>
        </ImeItem>
        <ImeItem type="button">
            <ImeGlyph d="M1 1V6H7M11 6H16V11Q15 15 11 16"/>
            <ImeText>中/英文标点</ImeText>
        </ImeItem>
        <ImeItem type="button">
            <ImeGlyph d="M2 2H17M1 7H16M6 3V11M12 3V11M6 11H12M13 15H17"/>
            <ImeText>简/繁体</ImeText>
        </ImeItem>
        <ImeItem type="button" $strong>
            <ImeGlyph d="M2 3L6 1L9 4L12 1L16 3L15 7L17 9L15 13L12 15L9 12L6 15L2 13L4 9L1 7ZM6 6H12V10H6Z"/>
            <ImeText>输入法设置</ImeText>
        </ImeItem>
        <svg width="24" height="8" viewBox="0 0 24 8" aria-hidden="true">
            <path d="M2 2V6H9V2" fill="none" stroke="#345" strokeWidth="2"/>
            <ellipse cx="18" cy="4" rx="5" ry="2" fill="none" stroke="#8a7f80" strokeWidth="2"/>
        </svg>
    </ImeBar>
);

const App = () => (
    <Page>
        <GlobalStyle/>
        <Gradients/>
        <MenuBar>
            <Menus>
                <MenuIcon><Icon name="app" size={18}/></MenuIcon>
                {MENUS.map(([title, key]) => (
                    <MenuButton key={title} type="button">{title}{key && <>(<u>{key}</u>)</>}</MenuButton>
                ))}
                <MenuButton type="button" aria-label="帮助指针"><Icon name="helpPointer" size={20}/></MenuButton>
            </Menus>
            <WindowButtons>
                <WindowButton type="button" aria-label="最小化">
                    <svg width="10" height="10"><path d="M2 8H9" stroke="#7b8a9b" strokeWidth="2"/></svg>
                </WindowButton>
                <WindowButton type="button" aria-label="还原">
                    <svg width="10" height="10"><path d="M3 4V1H9V6H7M1 4H7V9H1ZM3 2H9M1 5H7" fill="none" stroke="#7b8a9b"/></svg>
                </WindowButton>
                <WindowButton type="button" aria-label="关闭">
                    <svg width="10" height="10"><path d="M1 1L9 9M9 1L1 9" stroke="#6f8193" strokeWidth="2"/></svg>
                </WindowButton>
            </WindowButtons>
        </MenuBar>
        <MainToolbar/>
        <Main>
            <Sidebar>
                <Tabs>
                    <Tab type="button" $active>模型</Tab>
                    <Tab type="button">结果</Tab>
                </Tabs>
                <Panel>
                    <PanelTools>
                        <SelectBox $width={245}>
                            <SelectIcon><Icon name="stack" size={22}/></SelectIcon>
                            <Select aria-label="数据库" $indent={27}><option>模型数据库</option></Select>
                            <Arrow/>
                        </SelectBox>
                        <PanelButton type="button" aria-label="排序"><Icon name="sort" size={20}/></PanelButton>
                        <PanelButton type="button" aria-label="上一级"><Icon name="folderUp" size={18}/></PanelButton>
                        <PanelButton type="button" aria-label="链接"><Icon name="branch" size={18}/></PanelButton>
                        <PanelButton type="button" aria-label="提示"><Icon name="bulb" size={19}/></PanelButton>
                    </PanelTools>
                    <ModelTree/>
                </Panel>
            </Sidebar>
            <Workspace>
                <ContextBar>
                    <SpinField id="module" label="模块" value="部件" width={124} down/>
                    <SpinField id="model" label="模型" value="Model-6" width={162} up down/>
                    <SpinField id="part" label="部件" value="" width={124}/>
                </ContextBar>
                <Stage>
                    <Toolbox>
                        {TOOLBOX.map((section, index) => (
                            <ToolSection key={section[0]} $first={index === 0}>
                                {section.map((entry) => (
                                    <Tool
                                        key={entry}
                                        as={ToolboxButton}
                                        name={entry.replace('+', '')}
                                        $more={entry.endsWith('+') && 'on'}
                                    />
                                ))}
                            </ToolSection>
                        ))}
                    </Toolbox>
                    <Viewport>
                        <InputMethodBar/>
                    </Viewport>
                </Stage>
                <BrandBar>
                    <svg width="28" height="28" viewBox="0 0 28 28" aria-hidden="true">
                        <path d="M9 3Q20 0 17 6Q14 9 8 12M2 25Q10 22 12 16Q12 12 6 15L3 25M25 12Q15 12 18 17Q25 22 13 24" fill="none" stroke="#12aba5" strokeWidth="2"/>
                    </svg>
                    <Brand>SIMULIA</Brand>
                    <Watermark>CSDN @strive to gain</Watermark>
                </BrandBar>
            </Workspace>
        </Main>
        <MessageArea>
            <Message>
                <MessageWord>模型数据库</MessageWord>
                {' "E:\\ABAQUS-sport\\2022Exam-sort\\ABAQUS-mattress\\cube-unit-parts\\cube.cae" '}
                <MessageWord>已打开。</MessageWord>
            </Message>
        </MessageArea>
    </Page>
);

export default App;
